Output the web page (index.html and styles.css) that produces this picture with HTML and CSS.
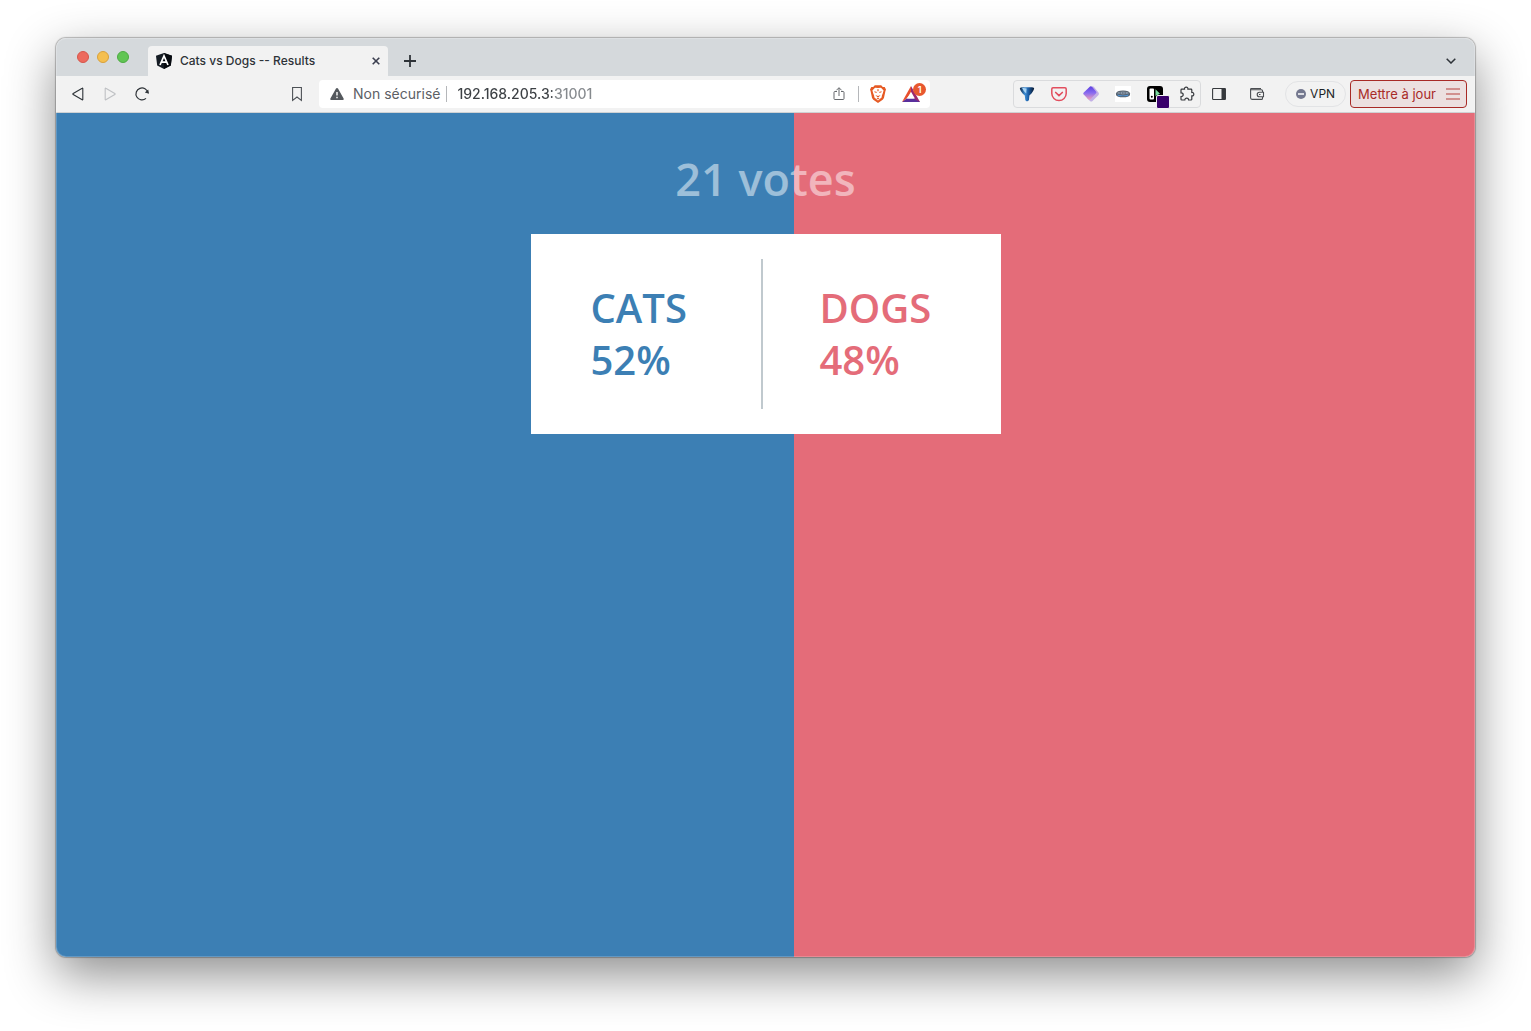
FILE: index.html
```html
<!DOCTYPE html>
<html lang="fr">
<head>
<meta charset="utf-8">
<meta name="viewport" content="width=device-width, initial-scale=1">
<title>Cats vs Dogs -- Results</title>
<link rel="stylesheet" href="styles.css">
</head>
<body>
<div class="window">
  <header class="tabbar">
    <div class="lights">
      <button class="light light-close" aria-label="Fermer"></button>
      <button class="light light-min" aria-label="Réduire"></button>
      <button class="light light-max" aria-label="Agrandir"></button>
    </div>
    <div class="tab">
      <svg width="16" height="16" viewBox="0 0 16 16" aria-hidden="true">
        <path d="M8 0 16 2.7 14.8 12.5 8 16 1.2 12.5 0 2.7Z" fill="#151c24"/>
        <path d="M8 0 16 2.7 14.8 12.5 8 16Z" fill="#070b10"/>
        <path d="M4 12 8 2.8 12 12M5.4 9.2H10.6" fill="none" stroke="#fff" stroke-width="1.7"/>
      </svg>
      <span class="tab-title">Cats vs Dogs -- Results</span>
      <button class="icon-button tab-close" aria-label="Fermer l'onglet">
        <svg width="8" height="8" viewBox="0 0 8 8"><path d="M.7.7l6.6 6.6M7.3.7.7 7.3" stroke="#3b3e4f" stroke-width="1.6"/></svg>
      </button>
    </div>
    <button class="icon-button new-tab" aria-label="Nouvel onglet">
      <svg width="12" height="12" viewBox="0 0 12 12"><path d="M6 0v12M0 6h12" stroke="#2e3338" stroke-width="1.8"/></svg>
    </button>
    <button class="icon-button tab-menu" aria-label="Rechercher dans les onglets">
      <svg width="10" height="6" viewBox="0 0 10 6"><path d="M.7.7 5 5 9.3.7" fill="none" stroke="#2e3338" stroke-width="1.5"/></svg>
    </button>
  </header>

  <nav class="toolbar">
    <div class="group">
      <button class="icon-button" aria-label="Précédent">
        <svg width="16" height="16" viewBox="0 0 16 16"><path d="M12.2 2.2Q12.8 1.8 12.8 2.6V13.4Q12.8 14.2 12.2 13.8L3.2 8.6Q2.4 8 3.2 7.4Z" fill="none" stroke="#2e3338" stroke-width="1.1"/></svg>
      </button>
      <button class="icon-button" aria-label="Suivant">
        <svg width="16" height="16" viewBox="0 0 16 16"><path d="M3.8 2.2Q3.2 1.8 3.2 2.6V13.4Q3.2 14.2 3.8 13.8L12.8 8.6Q13.6 8 12.8 7.4Z" fill="none" stroke="#bfc1c4" stroke-width="1.1"/></svg>
      </button>
      <button class="icon-button" aria-label="Actualiser">
        <svg width="16" height="16" viewBox="0 0 16 16"><path d="M12 12.4A6 6 0 1 1 13.9 7" fill="none" stroke="#2e3338" stroke-width="1.2"/><path d="M10.8 6.6 15 7.8 14.2 3.5" fill="#2e3338"/></svg>
      </button>
    </div>
    <div class="space-before"></div>
    <button class="icon-button bookmark" aria-label="Ajouter aux favoris">
      <svg width="16" height="16" viewBox="0 0 16 16"><path d="M3.6 1.5H12.4V14.4L8 11 3.6 14.4Z" fill="none" stroke="#4d5156" stroke-width="1.1"/></svg>
    </button>
    <div class="address">
      <button class="security">
        <svg width="14" height="12" viewBox="0 0 14 12" aria-hidden="true"><path d="M7 0Q7.7 0 8 .6L13.6 10.5Q14.2 12 12.8 12H1.2Q-.2 12 .4 10.5L6 .6Q6.3 0 7 0Z" fill="#54585d"/><path d="M7 4v3.6M7 8.8v1.5" stroke="#fff" stroke-width="1.4"/></svg>
        <span class="label">Non sécurisé</span>
      </button>
      <input class="url" type="text" aria-label="Adresse" value="192.168.205.3:31001">
      <button class="icon-button" aria-label="Partager">
        <svg width="16" height="16" viewBox="0 0 16 16"><path d="M6 5.5H3.9Q3 5.500 3 6.400V12.600Q3 13.500 3.900 13.500H12.100Q13 13.500 13 12.600V6.400Q13 5.500 12.100 5.500H10M8 10V1.900M5.400 4.300 8 1.700 10.600 4.300" fill="none" stroke="#66696d"/></svg>
      </button>
      <button class="shields" aria-label="Brave Shields">
        <svg width="16" height="18" viewBox="0 0 16 18"><path d="M4.800.3H11.200L12.800 2 14.700 2 16 4.500 15.400 6.200 14 12.800Q13.600 14 12.700 14.700L8 18 3.300 14.700Q2.400 14 2 12.800L.6 6.200 0 4.500 1.300 2 3.200 2Z" fill="#e65a24"/><path d="M8 3 11 2.700 13.600 5.500 12.800 8.200 11.900 10.600 11.600 12.600 8 15.500 4.400 12.600 4.100 10.600 3.200 8.200 2.400 5.500 5 2.700Z" fill="#fff"/><path d="M4.200 6.300 7 7 6.600 7.800 4.800 7.600ZM11.800 6.300 9 7 9.400 7.800 11.200 7.600ZM7.300 4.200H8.700L8.500 6.300H7.500ZM5.400 10 8 10.900 10.600 10 8.600 12.200H7.400ZM6.500 13.500 8 12.800 9.500 13.500 8 14.500Z" fill="#e65a24"/></svg>
      </button>
      <button class="rewards" aria-label="Brave Rewards, 1 notification">
        <svg width="18" height="16" viewBox="0 0 18 16"><path d="M9 0 18 16H13.700L9 7.300Z" fill="#9c276f"/><path d="M0 16 4.500 12.600H11.900L18 16Z" fill="#592f9c"/><path d="M9 0V7.300L4.500 12.600 0 16Z" fill="#e9502d"/><path d="M9 5.800 12.900 12.600H5.100Z" fill="#fff"/></svg>
        <span class="badge">1</span>
      </button>
    </div>
    <div class="space-after"></div>
    <div class="group extensions">
      <button class="icon-button" aria-label="Extension entonnoir">
        <svg width="16" height="16" viewBox="0 0 16 16"><defs><linearGradient id="funnel"><stop stop-color="#0b2344"/><stop offset=".35" stop-color="#3f8fd6"/><stop offset=".6" stop-color="#1c5ea6"/><stop offset="1" stop-color="#07162d"/></linearGradient></defs><path d="M.8 2.200Q1.500 1 4 1.200H12Q14.500 1 15.200 2.200 14.600 5.500 10.400 9.600L9.900 14.200 8 15.500 6.300 14.200 5.800 9.600Q1.400 5.500.8 2.200Z" fill="url(#funnel)"/><path d="M3 1.800 7.600 2.600 7.200 7.400Q4.200 5 3 1.800Z" fill="#a9d5f5"/></svg>
      </button>
      <button class="icon-button" aria-label="Pocket">
        <svg width="16" height="16" viewBox="0 0 16 16"><path d="M2 1.800H14Q15.200 1.800 15.200 3V7.500A7.200 7 0 0 1 .8 7.500V3Q.8 1.800 2 1.800Z" fill="none" stroke="#e24e5e" stroke-width="1.500"/><path d="M4.700 6.500 8 9.600 11.300 6.500" fill="none" stroke="#e24e5e" stroke-width="1.700" stroke-linecap="round"/></svg>
      </button>
      <button class="icon-button" aria-label="Extension losange">
        <svg width="16" height="16" viewBox="0 0 16 16"><defs><linearGradient id="gem" x1=".5" y1="0" x2=".5" y2="1"><stop stop-color="#5b3fe0"/><stop offset=".5" stop-color="#8a6cf0"/><stop offset="1" stop-color="#f0a0b8"/></linearGradient></defs><path d="M9 .5Q10 0 11 1L15.500 6.500Q16.500 8 15.300 9.200L9.500 15Q8.300 16.200 7 15L4 12Z" fill="#c3b0e6"/><path d="M7 .6Q8 -.2 9 .8L13 5.500Q13.800 6.600 12.900 7.600L7.200 13.400Q6.200 14.200 5.200 13.300L.7 8.600Q-.2 7.600.8 6.500Z" fill="url(#gem)"/></svg>
      </button>
      <button class="icon-button" aria-label="Extension disque">
        <svg width="16" height="16" viewBox="0 0 16 16"><path fill="#fff" d="M0 0H16V16H0Z"/><path d="M1 7.500Q1.500 4.600 8 4.600T15 7.500V9Q14 11.300 8 11.300T1 9Z" fill="#56616d"/><path d="M2 7.300Q3 5.500 8 5.500T14 7.300Q12 8.400 8 8.400T2 7.300Z" fill="#8b99a8"/><path d="M2 8.600Q8 10.200 14 8.600L12.500 10.300H3.500Z" fill="#4f93d4"/><path d="M4.500 7h7" stroke="#4b5a6c" stroke-dasharray="1.500 1"/></svg>
      </button>
      <button class="icon-button swatched" aria-label="Extension couleur">
        <svg width="16" height="16" viewBox="0 0 16 16"><rect width="16" height="16" rx="3"/><rect x="2.500" y="2.500" width="4.500" height="11" rx="1" fill="#fff"/><circle cx="4.800" cy="10.800" r="1" /><path d="M8.500 3.200 13 7.800 8.500 10Z" fill="#79dba0"/></svg>
        <span class="swatch"></span>
      </button>
      <button class="icon-button" aria-label="Extensions">
        <svg width="16" height="16" viewBox="0 0 16 16"><path d="M2 4Q2 3.200 2.800 3.200H5.500C5.300 1.900 6.100 1.200 7.200 1.200S9.100 1.900 8.900 3.200H12Q12.800 3.200 12.800 4V6.500C14.100 6.300 14.800 7.100 14.800 8.200S14.100 10.100 12.800 9.900V13.200Q12.800 14 12 14H9.600C9.600 12.800 8.700 12.200 7.700 12.200S5.800 12.800 5.800 14H2.800Q2 14 2 13.200V10.700C3.300 10.700 4.200 9.900 4.200 8.700S3.300 6.800 2 6.800Z" fill="none" stroke="#36393d" stroke-width="1.200"/></svg>
      </button>
    </div>
    <button class="icon-button sidebar" aria-label="Barre latérale">
      <svg width="16" height="16" viewBox="0 0 16 16"><rect x="1.600" y="2.500" width="12.800" height="11" rx=".8" fill="none" stroke="#36393d" stroke-width="1.100"/><path d="M10.500 2.500H14.500V13.500H10.500Z" fill="#36393d"/></svg>
    </button>
    <button class="icon-button wallet" aria-label="Portefeuille">
      <svg width="16" height="16" viewBox="0 0 16 16"><path d="M13.500 6V4.800Q13.500 3.800 12.500 3.800H2.700Q1.600 3.800 1.600 2.900 1.600 2.500 2.500 2.500H12M1.600 3V11.800Q1.600 13.400 3 13.400H12.400Q13.500 13.400 13.500 12.400V11M14.500 6.200H10.500A2.300 2.300 0 0 0 10.500 10.800H14.500ZM10 8.500H11.500" fill="none" stroke="#4b4e52" stroke-width="1.100"/></svg>
    </button>
    <button class="vpn">
      <svg width="10" height="10" viewBox="0 0 10 10" aria-hidden="true"><circle cx="5" cy="5" r="5" fill="#74788f"/><path d="M2 5H8" stroke="#fff" stroke-width="1.500"/></svg>
      <span class="label">VPN</span>
    </button>
    <button class="update">
      <span>Mettre à jour</span>
      <svg width="14" height="12" viewBox="0 0 14 12" aria-hidden="true"><path d="M0 1H14M0 6H14M0 11H14" stroke="#b5403d" stroke-width="1.200"/></svg>
    </button>
  </nav>

  <main class="results">
    <p class="total">21 votes</p>
    <section class="card">
      <div class="choice cats">
        <div>Cats</div>
        <div>52%</div>
      </div>
      <div class="divider"></div>
      <div class="choice dogs">
        <div>Dogs</div>
        <div>48%</div>
      </div>
    </section>
  </main>
</div>
</body>
</html>
```
FILE: styles.css
```css
* {
  box-sizing: border-box;
}

body {
  margin: 0;
  padding: 38px 56px 74px;
  min-height: 100vh;
  display: flex;
  background: #fff;
  font-family: Inter, "Liberation Sans", sans-serif;
}

button {
  padding: 0;
  border: 0;
  background: none;
  font: inherit;
  color: inherit;
}

svg {
  display: block;
  flex: none;
}

.window {
  position: relative;
  flex: 1;
  display: flex;
  flex-direction: column;
  overflow: hidden;
  border-radius: 10px;
  box-shadow: 0 0 1px 1px rgba(0, 0, 0, 0.25), 0 18px 50px rgba(0, 0, 0, 0.45);
}

/* Light rim along the inside of the window edge. */
.window::after {
  content: "";
  position: absolute;
  inset: 0;
  border-radius: 10px;
  box-shadow: inset 0 0 0 1px rgba(255, 255, 255, 0.2);
  pointer-events: none;
}

.tabbar {
  display: flex;
  align-items: flex-end;
  height: 38px;
  padding-right: 16px;
  background: #d5d9dc;
}

.lights {
  display: flex;
  gap: 8px;
  padding: 0 19px 13px 21px;
}

.light {
  width: 12px;
  height: 12px;
  border: 1px solid;
  border-radius: 50%;
}

.light-close {
  background: #ed6a5e;
  border-color: #d6564b;
}

.light-min {
  background: #f5bf4f;
  border-color: #d9a13a;
}

.light-max {
  background: #61c554;
  border-color: #4dab42;
}

.tab {
  display: flex;
  align-items: center;
  gap: 8px;
  width: 240px;
  height: 30px;
  padding: 0 4px 0 8px;
  border-radius: 4px 4px 0 0;
  background: #f2f2f2;
  color: #2e3338;
  font-size: 12px;
  font-weight: 500;
}

.tab-title {
  flex: 1;
  padding-bottom: 2px;
  white-space: nowrap;
}

.label {
  padding-bottom: 2px;
}

.icon-button {
  display: flex;
  align-items: center;
  justify-content: center;
  width: 16px;
  height: 16px;
}

.new-tab {
  margin: 0 auto 7px 14px;
}

.tab-menu {
  margin-bottom: 7px;
}

.toolbar {
  display: flex;
  align-items: center;
  height: 37px;
  padding: 0 8px 0 14px;
  border-bottom: 1px solid #cfd2d4;
  background: #f2f2f2;
}

.group {
  display: flex;
  gap: 16px;
}

.space-before {
  flex: 139;
}

.space-after {
  flex: 83;
}

.bookmark {
  margin-right: 14px;
}

.address {
  flex: 596;
  display: flex;
  align-items: center;
  min-width: 0;
  height: 28px;
  padding: 0 4px 0 11px;
  border-radius: 4px;
  background: #fff;
  font-size: 14px;
}

.security {
  display: flex;
  align-items: center;
  gap: 9px;
  padding-right: 6px;
  border-right: 1px solid #b5b7ba;
  height: 16px;
  color: #5c6065;
  white-space: nowrap;
}

/* The host is darker than the port that follows it. */
.url {
  flex: 1;
  min-width: 0;
  height: 20px;
  padding: 0 0 2px 10px;
  border: 0;
  font: inherit;
  font-weight: 500;
  color: transparent;
  background: linear-gradient(90deg, #3c4044 105px, #85898d 105px);
  -webkit-background-clip: text;
  background-clip: text;
}

.shields {
  margin-left: 11px;
  padding: 0 16px 0 11px;
  border-left: 1px solid #b5b7ba;
  height: 16px;
  display: flex;
  align-items: center;
}

.rewards {
  position: relative;
  width: 24px;
  height: 16px;
}

.badge {
  position: absolute;
  top: -3px;
  right: 0;
  width: 13px;
  height: 13px;
  border-radius: 50%;
  background: #e8582f;
  color: #fff;
  font-size: 9px;
  font-weight: 600;
  line-height: 13px;
  text-align: center;
}

.extensions {
  padding: 5px 5px;
  border: 1px solid #dadbdd;
  border-radius: 4px;
}

.swatched {
  position: relative;
}

.swatch {
  position: absolute;
  left: 9px;
  top: 9px;
  width: 14px;
  height: 14px;
  border: 1px solid #f2f2f2;
  border-radius: 2px;
  background: #39006b;
}

.sidebar {
  margin: 0 22px 0 10px;
}

.wallet {
  margin-right: 20px;
}

.vpn {
  display: flex;
  align-items: center;
  gap: 4px;
  height: 26px;
  padding: 0 10px;
  border: 1px solid #e2e3e5;
  border-radius: 13px;
  color: #1d1f25;
  font-size: 12px;
}

.update {
  display: flex;
  align-items: center;
  gap: 10px;
  height: 28px;
  margin-left: 4px;
  padding: 0 6px 0 7px;
  border: 1px solid #a82a26;
  border-radius: 4px;
  background: #ece0e0;
  color: #a82a26;
  font-size: 13px;
  white-space: nowrap;
}

.results {
  flex: 1;
  display: flex;
  flex-direction: column;
  align-items: center;
  padding-top: 34px;
  background: linear-gradient(90deg, #3c7fb4 52%, #e46c79 52%);
  font-family: "Open Sans", sans-serif;
  font-weight: 600;
}

.total {
  margin: 0 0 23px;
  color: rgba(255, 255, 255, 0.5);
  font-size: 45px;
  line-height: 64px;
}

.card {
  display: grid;
  grid-template-columns: 230px 2px 1fr;
  align-items: center;
  width: 470px;
  height: 200px;
  background: #fff;
}

.choice {
  font-size: 40px;
  line-height: 52px;
  text-transform: uppercase;
}

.cats {
  padding-left: 60px;
  color: #3c7fb4;
}

.dogs {
  padding-left: 57px;
  color: #e46c79;
}

.divider {
  height: 150px;
  background: #c0c9ce;
}
```
